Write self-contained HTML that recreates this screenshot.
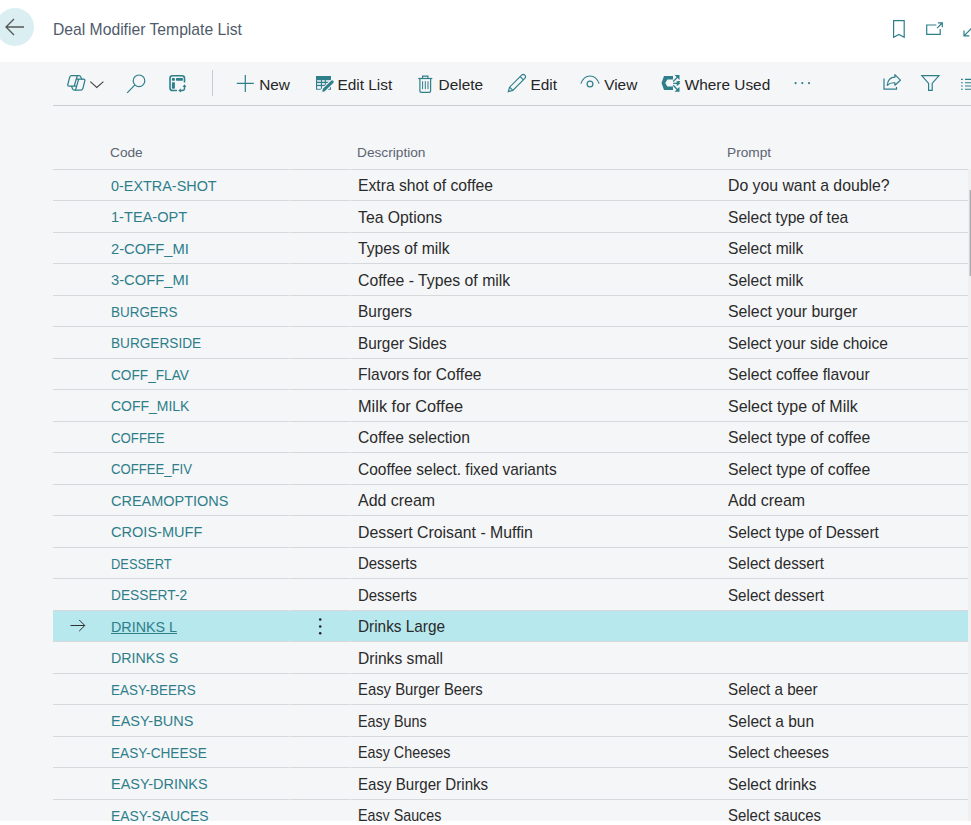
<!DOCTYPE html>
<html><head><meta charset="utf-8"><style>
html,body{margin:0;padding:0;}
body{width:971px;height:825px;overflow:hidden;position:relative;background:#fff;font-family:"Liberation Sans",sans-serif;}
svg{position:absolute;overflow:visible;}
.back{position:absolute;left:-4px;top:8px;width:38px;height:38px;border-radius:50%;background:#dbeff3;}
.title{position:absolute;left:53px;top:21.5px;font-size:15.7px;line-height:1;color:#4f5b6b;white-space:nowrap;}
.tb{position:absolute;left:0;top:62px;width:971px;height:759px;background:#f5f6f8;}
.tbline{position:absolute;left:53px;top:105px;width:918px;height:1px;background:#c9cdd2;}
.hdr{position:absolute;top:145px;font-size:13.7px;color:#5b6470;white-space:nowrap;}
.row{position:absolute;left:53px;width:915px;height:31.5px;border-top:1px solid #d6d8db;box-sizing:border-box;}
.row.sel{background:#b7e8ed;}
.row span{position:absolute;top:7.5px;white-space:nowrap;font-size:15.7px;color:#2a2a2a;}
.row .c{left:58px;color:#2e7e8a;font-size:15.4px;transform:scaleX(0.917);transform-origin:0 0;top:7px;}
.row.sel .c{text-decoration:underline;text-underline-offset:1px;text-decoration-thickness:1px;}
.row .d,.row .p{transform-origin:0 0;}
.row .d{left:305px;}
.row .p{left:675px;}
.arrow{left:17px;top:8px;}
.dots{position:absolute;left:265.8px;top:8.2px;width:3px;height:18px;}
.dots i{display:block;width:2.6px;height:2.6px;border-radius:50%;background:#222;margin-bottom:4.2px;}
.lbl{position:absolute;top:77px;font-size:15.4px;line-height:1;color:#262626;white-space:nowrap;}
.sep{position:absolute;left:212px;top:70px;width:1px;height:26px;background:#c9cdd2;}
.track{position:absolute;left:968px;top:169px;width:3px;height:652px;background:#f0f0f1;}
.scroll{position:absolute;}
.gap{position:absolute;top:-1px;width:1px;height:1px;background:rgba(245,246,248,.75);}
.bottom{position:absolute;left:0;top:821px;width:971px;height:4px;background:#fff;}
.tl{fill:none;stroke:#2f7f8b;stroke-width:1.2;}
</style></head><body>
<div class="back"></div>
<svg style="left:5px;top:18px" width="20" height="18" viewBox="0 0 20 18"><path d="M1 9H19M9 1L1 9L9 17" fill="none" stroke="#555" stroke-width="1.3"/></svg>
<div class="title">Deal Modifier Template List</div>

<!-- top right icons -->
<svg style="left:893px;top:20px" width="12" height="18" viewBox="0 0 12 18"><path class="tl" d="M0.6 0.6H11.2V17.2L5.9 14.4L0.6 17.2Z"/></svg>
<svg style="left:926px;top:22px" width="18" height="13" viewBox="0 0 18 13"><path class="tl" d="M10.3 3H0.7V12.3H14.2V7M11.1 6.2L16.2 1M11.9 0.8H16.3V5.2"/></svg>
<svg style="left:962.8px;top:26.2px" width="12" height="11" viewBox="0 0 12 11"><path class="tl" d="M1 9.8L10.5 0.3M1 4.6V9.8H6.3"/></svg>

<div class="tb"></div>
<div class="tbline"></div>

<!-- toolbar icons -->
<svg style="left:67px;top:75px" width="19" height="16" viewBox="0 0 19 16"><g fill="none" stroke="#2f7f8b" stroke-width="1.25" stroke-linejoin="round" stroke-linecap="round"><path d="M4.6 0.5H12Q13.3 0.5 13.8 2L14.3 3.4Q14.6 4.2 15.5 4.2H16.6Q18.2 4.2 17.8 5.8L15.9 13.3Q15.4 15.1 13.6 15.1H7.4Q6 15.1 5.5 13.8L4.9 12Q4.6 11.1 3.7 11.1H2Q0.4 11.1 0.8 9.5L2.7 2.2Q3.2 0.5 4.6 0.5Z"/><path d="M10.3 0.8L7.2 11M4.7 11.1H9.3M10.1 4.2H15.2M11.6 4.4L8.6 14.9"/></g></svg>
<svg style="left:90px;top:81px" width="14" height="7" viewBox="0 0 14 7"><path d="M0.3 0.6L6.8 6.4L13.4 0.6" fill="none" stroke="#444" stroke-width="1.1"/></svg>
<svg style="left:126px;top:74px" width="20" height="20" viewBox="0 0 20 20"><circle class="tl" cx="13" cy="6.8" r="5.8"/><path class="tl" d="M8.9 10.9L1.2 18.8"/></svg>
<svg style="left:169px;top:75px" width="18" height="18" viewBox="0 0 18 18"><path fill="none" stroke="#2f7f8b" stroke-width="1.6" d="M7.9 15.5H3.6Q1 15.5 1 12.9V3.3Q1 0.8 3.6 0.8H12.9Q15.5 0.8 15.5 3.3V7.6"/><rect x="7" y="3.1" width="6.9" height="2.6" rx="0.6" fill="#2f7f8b"/><rect x="2.9" y="3.1" width="3" height="2.6" rx="0.6" fill="#2f7f8b"/><rect x="2.9" y="7.2" width="3" height="6.5" rx="0.7" fill="#2f7f8b"/><path d="M15.5 11V13.2Q15.5 15.5 13.2 15.5H11.6" fill="none" stroke="#2f7f8b" stroke-width="1.4"/><path d="M13.6 12L15.5 9.2L17.4 12Z M12 13.5L9.2 15.5L12 17.4Z" fill="#2f7f8b"/></svg>
<div class="sep"></div>

<svg style="left:236px;top:75px" width="18" height="17" viewBox="0 0 18 17"><path class="tl" stroke-width="1.3" d="M9.3 0V16.9M0.8 8.4H17.8"/></svg>
<span class="lbl" style="left:259.2px">New</span>

<svg style="left:316px;top:76px" width="18" height="17" viewBox="0 0 18 17"><rect x="0" y="0" width="15" height="13.7" fill="#2f7f8b"/><g fill="#f5f6f8"><rect x="1.1" y="4.2" width="3.8" height="1.5"/><rect x="6" y="4.2" width="2.8" height="1.5"/><rect x="9.9" y="4.2" width="4" height="1.5"/><rect x="1.1" y="7.1" width="3.8" height="1.7"/><rect x="6" y="7.1" width="2.8" height="1.7"/><rect x="9.9" y="7.1" width="4" height="1.7"/><rect x="1.1" y="10.1" width="3.8" height="2.7"/><rect x="6" y="10.1" width="2.8" height="2.7"/><rect x="9.9" y="10.1" width="4" height="2.7"/></g><path d="M6.8 15L16.3 5.8" stroke="#f5f6f8" stroke-width="5.2" stroke-linecap="round" fill="none"/><path d="M8.4 13.4L16.2 5.9" stroke="#2f7f8b" stroke-width="3" stroke-linecap="round" fill="none"/><path d="M6.1 15.9L7 12.6L9.4 14.9Z" fill="#2f7f8b"/></svg>
<span class="lbl" style="left:337.5px">Edit List</span>

<svg style="left:418px;top:75px" width="15" height="18" viewBox="0 0 15 18"><g class="tl" stroke-width="1.2"><path d="M0.3 3.5H14.3"/><path d="M4.6 3.3V1.1H9.9V3.3"/><path d="M1.9 3.6V16Q1.9 17.3 3.2 17.3H11.4Q12.6 17.3 12.6 16V3.6"/><path d="M4.6 6.2V14.2M7.3 6.2V14.2M10 6.2V14.2" stroke-width="1"/></g></svg>
<span class="lbl" style="left:438.6px">Delete</span>

<svg style="left:507px;top:73px" width="20" height="20" viewBox="0 0 20 20"><path class="tl" stroke-width="1.2" d="M1.3 18.6L2.6 14.2L14.6 2.2Q16.3 0.7 17.8 2.2Q19.3 3.7 17.8 5.4L5.8 17.4Z M13.2 3.6L16.4 6.8 M2.6 14.2L5.8 17.4"/></svg>
<span class="lbl" style="left:530.5px">Edit</span>

<svg style="left:580px;top:75px" width="20" height="14" viewBox="0 0 20 14"><path class="tl" stroke-width="1.3" d="M0.9 8.6Q3.7 1 10 1Q16.3 1 19.1 8.6"/><circle class="tl" stroke-width="1.3" cx="10" cy="9" r="2.9"/></svg>
<span class="lbl" style="left:604.2px">View</span>

<svg style="left:661px;top:74px" width="21" height="19" viewBox="0 0 21 19"><path fill="#2f7f8b" d="M3 2H12V5.5H6.3L4.3 8.9L6.3 12.4H12V16H3L0.5 9Z"/><g stroke="#2f7f8b" stroke-width="1.3" fill="none"><path d="M12.2 7.5L17 2.6M12.2 9.4H18.2M12.2 11.3L17 16.2"/></g><path fill="#2f7f8b" d="M13.6 1.1H18.5V6Z M16.4 7H19.3L16.4 11.8Z M13.6 17.7H18.5V12.8Z"/><path fill="#2f7f8b" d="M15.7 6.8L19.3 9.4L15.7 12Z"/></svg>
<span class="lbl" style="left:684.7px">Where Used</span>

<svg style="left:794px;top:82px" width="17" height="3" viewBox="0 0 17 3"><g fill="#2f7f8b"><circle cx="1.6" cy="1.1" r="1.1"/><circle cx="8.3" cy="1.1" r="1.1"/><circle cx="15" cy="1.1" r="1.1"/></g></svg>

<svg style="left:883px;top:74px" width="19" height="17" viewBox="0 0 19 17"><path class="tl" stroke-width="1.3" d="M1 4.4V15.1H13.5V12.9"/><path class="tl" stroke-width="1.1" stroke-linejoin="round" d="M4.2 11.3C4.8 6 8 3.2 11.9 3.2V0.6L17.4 6.2L11.9 11.2V8.8C8.5 8.6 6 9.4 4.2 11.3Z"/></svg>
<svg style="left:921px;top:75px" width="19" height="16" viewBox="0 0 19 16"><path class="tl" stroke-width="1.3" d="M0.8 0.6H18L11.2 8.4V15.3H7.6V8.4Z"/></svg>
<svg style="left:960px;top:78px" width="12" height="13" viewBox="0 0 12 13"><g stroke="#2f7f8b" stroke-width="1.1" fill="none"><path d="M1 1.4H2.8M1 4.7H2.8M1 8H2.8M1 11.3H2.8"/><path d="M5 1.4H12M5 4.7H12M5 8H12M5 11.3H12"/></g></svg>

<div class="hdr" style="left:110px">Code</div>
<div class="hdr" style="left:357px">Description</div>
<div class="hdr" style="left:727px">Prompt</div>
<div class="row" style="top:168.95px"><i class="gap" style="left:236px"></i><i class="gap" style="left:297px"></i><span class="c" style="transform:scaleX(0.9359)">0-EXTRA-SHOT</span><span class="d" style="transform:scaleX(1.0008)">Extra shot of coffee</span><span class="p" style="transform:scaleX(1.007)">Do you want a double?</span></div>
<div class="row" style="top:200.45px"><i class="gap" style="left:236px"></i><i class="gap" style="left:297px"></i><span class="c" style="transform:scaleX(0.9483)">1-TEA-OPT</span><span class="d" style="transform:scaleX(1.0049)">Tea Options</span><span class="p" style="transform:scaleX(0.9917)">Select type of tea</span></div>
<div class="row" style="top:231.95px"><i class="gap" style="left:236px"></i><i class="gap" style="left:297px"></i><span class="c" style="transform:scaleX(0.9589)">2-COFF_MI</span><span class="d" style="transform:scaleX(1.0)">Types of milk</span><span class="p" style="transform:scaleX(0.9932)">Select milk</span></div>
<div class="row" style="top:263.45px"><i class="gap" style="left:236px"></i><i class="gap" style="left:297px"></i><span class="c" style="transform:scaleX(0.9589)">3-COFF_MI</span><span class="d" style="transform:scaleX(1.0073)">Coffee - Types of milk</span><span class="p" style="transform:scaleX(0.9932)">Select milk</span></div>
<div class="row" style="top:294.95px"><i class="gap" style="left:236px"></i><i class="gap" style="left:297px"></i><span class="c" style="transform:scaleX(0.8738)">BURGERS</span><span class="d" style="transform:scaleX(0.9849)">Burgers</span><span class="p" style="transform:scaleX(1.0079)">Select your burger</span></div>
<div class="row" style="top:326.45px"><i class="gap" style="left:236px"></i><i class="gap" style="left:297px"></i><span class="c" style="transform:scaleX(0.8855)">BURGERSIDE</span><span class="d" style="transform:scaleX(0.9773)">Burger Sides</span><span class="p" style="transform:scaleX(0.9912)">Select your side choice</span></div>
<div class="row" style="top:357.95px"><i class="gap" style="left:236px"></i><i class="gap" style="left:297px"></i><span class="c" style="transform:scaleX(0.8866)">COFF_FLAV</span><span class="d" style="transform:scaleX(0.9926)">Flavors for Coffee</span><span class="p" style="transform:scaleX(0.9993)">Select coffee flavour</span></div>
<div class="row" style="top:389.45px"><i class="gap" style="left:236px"></i><i class="gap" style="left:297px"></i><span class="c" style="transform:scaleX(0.907)">COFF_MILK</span><span class="d" style="transform:scaleX(1.0418)">Milk for Coffee</span><span class="p" style="transform:scaleX(1.0192)">Select type of Milk</span></div>
<div class="row" style="top:420.95px"><i class="gap" style="left:236px"></i><i class="gap" style="left:297px"></i><span class="c" style="transform:scaleX(0.8587)">COFFEE</span><span class="d" style="transform:scaleX(0.9982)">Coffee selection</span><span class="p" style="transform:scaleX(1.0036)">Select type of coffee</span></div>
<div class="row" style="top:452.45px"><i class="gap" style="left:236px"></i><i class="gap" style="left:297px"></i><span class="c" style="transform:scaleX(0.853)">COFFEE_FIV</span><span class="d" style="transform:scaleX(0.9875)">Cooffee select. fixed variants</span><span class="p" style="transform:scaleX(1.0036)">Select type of coffee</span></div>
<div class="row" style="top:483.95px"><i class="gap" style="left:236px"></i><i class="gap" style="left:297px"></i><span class="c" style="transform:scaleX(0.94)">CREAMOPTIONS</span><span class="d" style="transform:scaleX(1.0162)">Add cream</span><span class="p" style="transform:scaleX(1.0162)">Add cream</span></div>
<div class="row" style="top:515.45px"><i class="gap" style="left:236px"></i><i class="gap" style="left:297px"></i><span class="c" style="transform:scaleX(0.9457)">CROIS-MUFF</span><span class="d" style="transform:scaleX(1.0099)">Dessert Croisant - Muffin</span><span class="p" style="transform:scaleX(0.9829)">Select type of Dessert</span></div>
<div class="row" style="top:546.95px"><i class="gap" style="left:236px"></i><i class="gap" style="left:297px"></i><span class="c" style="transform:scaleX(0.8364)">DESSERT</span><span class="d" style="transform:scaleX(0.9533)">Desserts</span><span class="p" style="transform:scaleX(0.9653)">Select dessert</span></div>
<div class="row" style="top:578.45px"><i class="gap" style="left:236px"></i><i class="gap" style="left:297px"></i><span class="c" style="transform:scaleX(0.8933)">DESSERT-2</span><span class="d" style="transform:scaleX(0.9533)">Desserts</span><span class="p" style="transform:scaleX(0.9653)">Select dessert</span></div>
<div class="row sel" style="top:609.95px"><svg class="arrow" width="16" height="13" viewBox="0 0 16 13"><path d="M0.5 6.5H14.8M9.2 0.9L14.8 6.5L9.2 12.1" fill="none" stroke="#303030" stroke-width="1"/></svg><svg style="left:265px;top:6px" width="4" height="18" viewBox="0 0 4 18"><g fill="#222"><circle cx="2.2" cy="2.6" r="1.25"/><circle cx="2.2" cy="9.4" r="1.25"/><circle cx="2.2" cy="16.2" r="1.25"/></g></svg><i class="gap" style="left:236px"></i><i class="gap" style="left:297px"></i><span class="c" style="transform:scaleX(0.9306)">DRINKS L</span><span class="d" style="transform:scaleX(0.9782)">Drinks Large</span></div>
<div class="row" style="top:641.45px"><i class="gap" style="left:236px"></i><i class="gap" style="left:297px"></i><span class="c" style="transform:scaleX(0.9249)">DRINKS S</span><span class="d" style="transform:scaleX(0.9952)">Drinks small</span></div>
<div class="row" style="top:672.95px"><i class="gap" style="left:236px"></i><i class="gap" style="left:297px"></i><span class="c" style="transform:scaleX(0.8728)">EASY-BEERS</span><span class="d" style="transform:scaleX(0.9473)">Easy Burger Beers</span><span class="p" style="transform:scaleX(0.9692)">Select a beer</span></div>
<div class="row" style="top:704.45px"><i class="gap" style="left:236px"></i><i class="gap" style="left:297px"></i><span class="c" style="transform:scaleX(0.9419)">EASY-BUNS</span><span class="d" style="transform:scaleX(0.9164)">Easy Buns</span><span class="p" style="transform:scaleX(0.9871)">Select a bun</span></div>
<div class="row" style="top:735.95px"><i class="gap" style="left:236px"></i><i class="gap" style="left:297px"></i><span class="c" style="transform:scaleX(0.8858)">EASY-CHEESE</span><span class="d" style="transform:scaleX(0.9141)">Easy Cheeses</span><span class="p" style="transform:scaleX(0.949)">Select cheeses</span></div>
<div class="row" style="top:767.45px"><i class="gap" style="left:236px"></i><i class="gap" style="left:297px"></i><span class="c" style="transform:scaleX(0.939)">EASY-DRINKS</span><span class="d" style="transform:scaleX(0.9632)">Easy Burger Drinks</span><span class="p" style="transform:scaleX(0.9852)">Select drinks</span></div>
<div class="row" style="top:798.95px"><i class="gap" style="left:236px"></i><i class="gap" style="left:297px"></i><span class="c" style="transform:scaleX(0.9035)">EASY-SAUCES</span><span class="d" style="transform:scaleX(0.9101)">Easy Sauces</span><span class="p" style="transform:scaleX(0.9526)">Select sauces</span></div>
<div class="track"></div><svg class="scroll" style="left:969px;top:190px" width="2" height="86"><rect x="0.6" y="0" width="1.4" height="86" fill="#a9abae"/></svg>
<div class="bottom"></div>
</body></html>
